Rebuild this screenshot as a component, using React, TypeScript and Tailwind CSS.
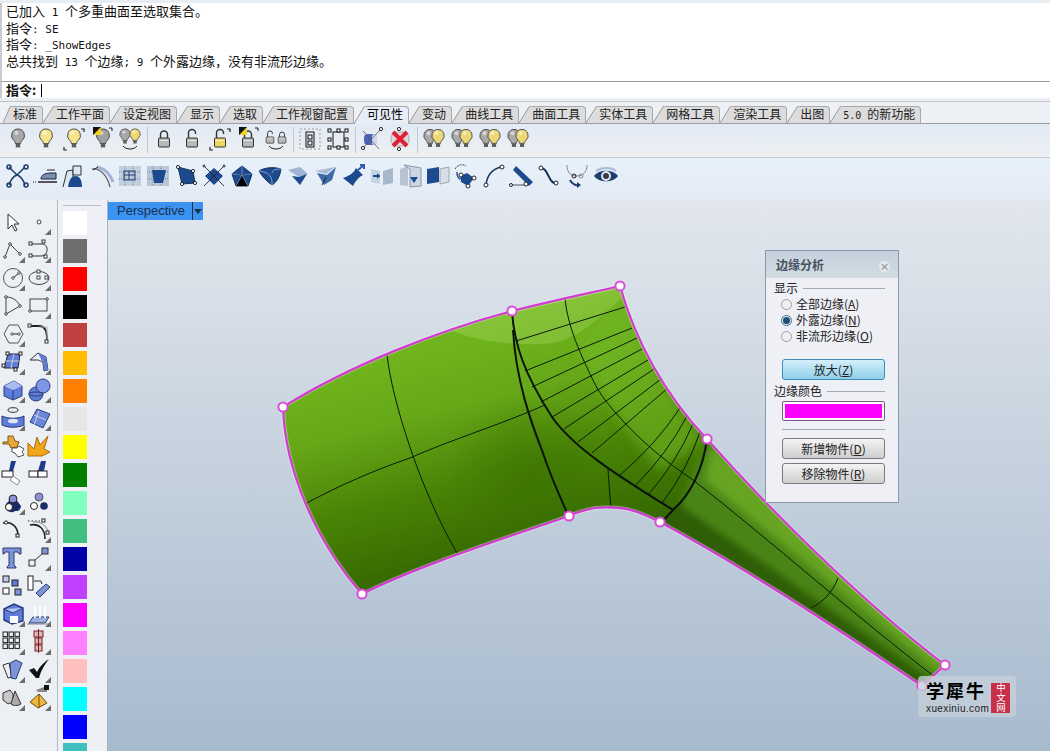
import React from "react";

const CN = '"Noto Sans CJK SC","Liberation Sans",sans-serif';
const LINE = '"Liberation Sans","Noto Sans CJK SC",sans-serif';
const MONO = '"DejaVu Sans Mono","Noto Sans CJK SC",monospace';

const Lat = ({ children, big }: { children: React.ReactNode; big?: boolean }) => (
  <span className={`${big ? "text-[11px]" : "text-[10px]"} leading-none`} style={{ fontFamily: MONO }}>{children}</span>
);

const S = ({ children, size = 26, box = 26 }: { children: React.ReactNode; size?: number; box?: number }) => (
  <svg width={size} height={size} viewBox={`0 0 ${box} ${box}`} className="block">{children}</svg>
);

const bulbPath = "M0-9a6.5 6.5 0 0 0-4 11.6c1 1 1.3 2 1.3 3h5.4c0-1 .3-2 1.3-3A6.5 6.5 0 0 0 0-9z";
const Bulb = ({ x = 13, y = 12, c = "#a8a8a8", s = 1 }: { x?: number; y?: number; c?: string; s?: number }) => (
  <g transform={`translate(${x} ${y}) scale(${s})`}>
    <path d={bulbPath} fill={c} stroke="#4c4c4c" strokeWidth="1" />
    <path d="M-2.2 6h4.4v3.4h-4.4z" fill="#5c5c5c" />
    <ellipse cx="-1.5" cy="-5" rx="2" ry="2" fill="#fff" opacity=".55" />
  </g>
);
const Lock = ({ x = 13, y = 15, c = "#b8b8b8", open = false, s = 1 }: { x?: number; y?: number; c?: string; open?: boolean; s?: number }) => (
  <g transform={`translate(${x} ${y}) scale(${s})`}>
    <path d={open ? "M-3.5-3v-5a3.5 3.5 0 0 1 7 0v1" : "M-3.5-3v-3.5a3.5 3.5 0 0 1 7 0V-3"} fill="none" stroke="#333" strokeWidth="1.4" />
    <rect x="-5.5" y="-3" width="11" height="9" rx="1" fill={c} stroke="#333" />
    <path d="M-4-.5h8" stroke="#fff" opacity=".7" />
  </g>
);
const Corners = () => (
  <path d="M3 21v3h3M20 3h3v3M3 3" fill="none" stroke="#222" strokeWidth="1.2" />
);
const Flag = () => (
  <g>
    <rect x="4" y="1" width="8" height="8" fill="#111" />
    <path d="M12 1v8H4z" fill="#f0d020" />
    <path d="M20 2h3v3" fill="none" stroke="#222" />
  </g>
);
const Dual = () => (
  <g>
    <Bulb x={9} y={12} c="#a9a9a9" s={0.95} />
    <Bulb x={17} y={12} c="#ecd874" s={0.95} />
  </g>
);
const B = "#1d4a8c", D = "#12305e", L = "#7fa3d6";
const H = ({ x, y, r = 1.6 }: { x: number; y: number; r?: number }) => <circle cx={x} cy={y} r={r} fill="#fff" stroke="#111" strokeWidth=".9" />;

const row1: (React.ReactNode | null)[] = [
  <Bulb />,
  <Bulb c="#f6e48c" />,
  <><Bulb c="#f6e48c" /><Corners /></>,
  <><Bulb c="#a0a0a0" x={14} /><Flag /></>,
  <><Bulb x={8} y={10} s={0.8} /><Bulb x={18} y={10} c="#ecd874" s={0.8} /><path d="M6 20c3 4 11 4 14 0" fill="none" stroke="#222" /></>,
  null,
  <Lock />,
  <Lock open />,
  <><Lock c="#eed75e" open /><Corners /></>,
  <><Lock /><Flag /></>,
  <><Lock x={7} y={13} s={0.7} open /><Lock x={19} y={13} s={0.7} /><path d="M6 20c3 4 11 4 14 0" fill="none" stroke="#222" /></>,
  null,
  <g fill="none" stroke="#999"><rect x="3" y="3" width="20" height="20" strokeDasharray="2 2" /><rect x="9" y="6" width="8" height="15" stroke="#111" /><rect x="11" y="9" width="4" height="4" stroke="#111" /><rect x="11" y="15" width="4" height="4" stroke="#111" /></g>,
  <g fill="#fff" stroke="#111"><rect x="8" y="6" width="11" height="15" fill="none" /><rect x="3" y="3" width="3" height="3" /><rect x="12" y="3" width="3" height="3" /><rect x="20" y="3" width="3" height="3" /><rect x="3" y="12" width="3" height="3" /><rect x="20" y="12" width="3" height="3" /><rect x="3" y="20" width="3" height="3" /><rect x="12" y="20" width="3" height="3" /><rect x="20" y="20" width="3" height="3" /></g>,
  null,
  <g><rect x="5" y="8" width="13" height="11" rx="4" fill="#4a64b8" /><rect x="13" y="8" width="5" height="11" rx="2.5" fill="#d0d8f0" /><path d="M4 22L22 3M4 5l16 18" stroke="#555" strokeWidth=".8" /><H x={22} y={3} /><H x={4} y={22} /></g>,
  <g><rect x="4" y="6" width="18" height="14" rx="6" fill="#d8d8e2" stroke="#aaa" /><path d="M6 6l14 14M20 6L6 20" stroke="#e02030" strokeWidth="4" /><H x={12} y={3} /><H x={12} y={23} /></g>,
  null,
  <Dual />, <Dual />, <Dual />, <Dual />,
];

const row2: React.ReactNode[] = [
  <g fill="none" stroke="#1c3a68" strokeWidth="1.5"><path d="M4 4l8 8 8-8M4 22c2-6 5-9 8-10 3 1 6 4 8 10" /><circle cx="4" cy="4" r="2" /><circle cx="21" cy="4" r="2" /><circle cx="4" cy="22" r="2" /><circle cx="21" cy="22" r="2" /></g>,
  <g><path d="M8 16c0-4 4-6 10-6h5v6z" fill="#7b8fb4" stroke="#223" /><path d="M5 19h19" stroke="#223" strokeWidth="1.5" /><path d="M0 19h4" stroke="#223" strokeDasharray="1 1" /><path d="M14 7h8" stroke="#223" /></g>,
  <g><path d="M2 24L6 8l6-1v7" fill="#dfe5ee" stroke="#234" /><path d="M12 3h8v9h-8z" fill="#dfe5ee" stroke="#234" /><path d="M7 24c1-8 4-11 8-11 4 0 6 5 6 11z" fill={B} /></g>,
  <g fill="none"><path d="M3 6c8-1 15 6 18 18" stroke="#666" strokeWidth="1.4" /><path d="M8 4c7 1 13 7 16 15" stroke="#9fb3d4" strokeWidth="3" /><path d="M4 7l5-3" stroke="#222" /></g>,
  <g><rect x="2" y="3" width="22" height="20" fill="#c3cfdf" /><path d="M2 9h22M2 16h22M8 3v20M16 3v20" stroke="#7b8aa0" strokeDasharray="1 1" /><rect x="7" y="8" width="11" height="9" fill="none" stroke="#1d3a70" /><path d="M12 8v9M7 12h11" stroke="#1d3a70" /></g>,
  <g><rect x="2" y="3" width="22" height="20" fill="#b9c6d8" /><path d="M2 9h22M2 16h22M8 3v20M16 3v20" stroke="#7b8aa0" strokeDasharray="1 1" /><path d="M7 7h14l-3 13H9z" fill={B} /></g>,
  <g><path d="M5 4l15 4 2 12-13 1z" fill={B} stroke={D} /><H x={5} y={4} /><H x={20} y={8} /><H x={22} y={20} /><H x={9} y={21} /></g>,
  <g><path d="M13 5l9 8-9 9-9-9z" fill={B} /><path d="M3 3l20 20M23 3L3 23" stroke="#223" strokeWidth=".9" /><H x={3} y={3} r={1} /><H x={23} y={3} r={1} /></g>,
  <g><path d="M13 3l10 8-4 12H7L3 11z" fill={B} stroke={D} /><path d="M13 3v9M3 11l10 1 10-1M7 23l6-11 6 11" stroke={L} strokeWidth=".7" /></g>,
  <g><path d="M2 8c6-4 16-4 22-2-1 7-4 13-9 16C9 18 5 13 2 8z" fill={B} stroke={D} /><path d="M2 8c7 1 14 3 13 14M24 6c-5 0-9 1-9 4" stroke={L} fill="none" /></g>,
  <g><path d="M3 7l12-3 8 7-9 3z" fill="#9fb4d4" /><path d="M7 13l7 1 8-3-7 11z" fill={B} /></g>,
  <g><path d="M2 8l20-4-9 7z" fill="#a8bcd8" /><path d="M4 10l10 2 9-8-4 13-8 5z" fill="#3f6aa8" /><path d="M9 22l4-8" stroke="#223" /></g>,
  <g><path d="M2 15C8 13 13 10 15 5l7 7c-4 2-8 6-10 11z" fill={B} /><path d="M17 7l6-5M19 2h4v4" stroke="#2a5aa8" strokeWidth="2" fill="none" /></g>,
  <g><path d="M2 6l9 2v13l-9-2z" fill="#c6d2e2" /><path d="M14 8l10-3v15l-10 2z" fill="#a8b8cc" /><path d="M4 13h7" stroke={B} strokeWidth="2" /><path d="M8 10l3 3-3 3z" fill={B} /></g>,
  <g><path d="M3 6l8-3v20l-8-1z" fill="#b8c4d4" /><path d="M7 2l17 3v18L13 24V6z" fill="#cdd6e2" stroke="#8896aa" /><path d="M13 14h8l-4 6z" fill={B} /></g>,
  <g><path d="M2 6l12-2v15L2 21z" fill={B} /><path d="M15 6l9-2v15l-9 2z" fill="#d6dde8" stroke="#9aa" /></g>,
  <g><path d="M7 13l7-3 7 5-6 8-7-4z" fill={B} /><H x={8} y={12} r={2} /><H x={21} y={15} r={2} /><H x={15} y={23} r={2} /><path d="M2 6c3-5 8-5 11-3" stroke="#444" strokeDasharray="2 1" fill="none" /><path d="M4 9c0 3 1 6 3 7" stroke={B} fill="none" strokeWidth="1.4" /></g>,
  <g fill="none"><path d="M5 22C6 12 12 6 20 4" stroke="#1c3a68" strokeWidth="1.6" /><circle cx="5" cy="22" r="2" fill="#fff" stroke="#222" /><circle cx="21" cy="4" r="2" fill="#fff" stroke="#222" /></g>,
  <g><path d="M7 3l17 16-4 4L4 7z" fill={B} /><path d="M2 22h14" stroke="#556" /><circle cx="2" cy="22" r="1.5" fill="#fff" stroke="#223" /><circle cx="17" cy="21" r="2" fill="#fff" stroke="#223" /></g>,
  <g fill="none"><path d="M3 6c4-2 6 2 8 6s4 9 9 8" stroke="#12305e" strokeWidth="2" /><circle cx="4" cy="5" r="2" fill="#fff" stroke="#223" /><circle cx="19" cy="20" r="2" fill="#fff" stroke="#223" /></g>,
  <g fill="none"><path d="M2 2c0 8 4 11 10 11s10-4 10-11" stroke="#888" /><circle cx="9" cy="13" r="2" stroke="#223" /><circle cx="16" cy="13" r="2" stroke="#889" /><path d="M5 17c2 4 6 6 9 5" stroke="#1d3a70" strokeWidth="2" /><path d="M12 19l4 3-4 3z" fill="#1d3a70" /></g>,
  <g><path d="M1 13c5-7 19-7 24 0-5 7-19 7-24 0z" fill="#1c3f70" /><path d="M3 8c6-4 15-4 20 0" stroke="#a8bcd4" strokeWidth="2" fill="none" /><circle cx="13" cy="13" r="5" fill="#e4e8ec" /><circle cx="13" cy="13" r="3" fill="#3a3a44" /></g>,
];

const BO = "#5f7cd8";
type Cell = { n: React.ReactNode; t?: boolean };
const left: Cell[] = [
  { n: <path d="M7 5v15l4-4 3 6 2-1-3-6h5z" fill="#fff" stroke="#333" /> },
  { n: <circle cx="12" cy="13" r="2" fill="#fff" stroke="#444" />, t: true },
  { n: <g fill="none" stroke="#444"><path d="M4 20L9 7l10 10" /><circle cx="4" cy="20" r="1.3" fill="#fff" /><circle cx="9" cy="7" r="1.3" fill="#fff" /><circle cx="19" cy="17" r="1.3" fill="#fff" /></g>, t: true },
  { n: <g fill="none" stroke="#333"><path d="M3 7h12c7 0 7 12-1 12H4" /><rect x="2" y="5" width="3" height="3" fill="#fff" /><rect x="15" y="3" width="3" height="3" fill="#fff" /><rect x="2" y="17" width="3" height="3" fill="#fff" /><rect x="17" y="18" width="3" height="3" fill="#fff" /></g>, t: true },
  { n: <g fill="none" stroke="#555"><circle cx="12" cy="13" r="9.5" /><path d="M12 13l6-5" stroke="#222" /><circle cx="12" cy="13" r="1.3" fill="#fff" /><circle cx="18" cy="8" r="1.3" fill="#fff" /></g>, t: true },
  { n: <g fill="none" stroke="#444"><ellipse cx="12" cy="13" rx="10" ry="6.5" /><rect x="10" y="5" width="3" height="3" fill="#fff" /><rect x="10" y="11" width="3" height="3" fill="#fff" /><rect x="18" y="11" width="3" height="3" fill="#fff" /></g>, t: true },
  { n: <g fill="none" stroke="#444"><path d="M5 4c7 0 12 4 14 9L5 21z" /><circle cx="5" cy="4" r="1.3" fill="#fff" /><circle cx="19" cy="13" r="1.3" fill="#fff" /><circle cx="5" cy="21" r="1.3" fill="#fff" /></g> },
  { n: <g fill="none" stroke="#444"><rect x="3" y="6" width="17" height="12" /><circle cx="3" cy="18" r="1.3" fill="#fff" /><circle cx="20" cy="6" r="1.3" fill="#fff" /></g>, t: true },
  { n: <g fill="none" stroke="#555"><path d="M3 13l5-9h9l5 9-5 9H8z" /><path d="M11 13h7" stroke="#222" /><circle cx="11" cy="13" r="1.2" fill="#fff" /><circle cx="18" cy="13" r="1.2" fill="#fff" /></g>, t: true },
  { n: <g fill="none"><path d="M3 5h9c7 0 8 7 8 15" stroke="#222" strokeWidth="1.8" /><path d="M12 6h8v14" stroke="#aaa" /><rect x="1" y="3" width="3" height="3" fill="#fff" stroke="#333" /><rect x="18" y="19" width="3" height="3" fill="#fff" stroke="#333" /></g> },
  { n: <g><path d="M7 5h12l-2 14H3z" fill={BO} stroke="#223" /><path d="M13 5l-3 14M5 12h13" stroke="#ccd" /><rect x="5" y="3" width="3" height="3" fill="#fff" stroke="#222" /><rect x="18" y="3" width="3" height="3" fill="#fff" stroke="#222" /><rect x="1" y="15" width="3" height="3" fill="#fff" stroke="#222" /><rect x="13" y="19" width="3" height="3" fill="#fff" stroke="#222" /></g>, t: true },
  { n: <g><path d="M3 11l8-7 8 4 2 13-4 1-1-8c-2-3-6-3-6-3z" fill="#e8ecf4" stroke="#333" /><path d="M11 4l8 4 2 13-4 1-1-8z" fill={BO} /></g>, t: true },
  { n: <g><path d="M3 9l10-5 8 5v10l-9 4-9-4z" fill={BO} stroke="#2a3f80" /><path d="M3 9l9 4 9-4-8-5z" fill="#a8bcf0" /><path d="M12 13v10" stroke="#2a3f80" /></g>, t: true },
  { n: <g><circle cx="9" cy="17" r="7" fill={BO} stroke="#2a3f80" /><circle cx="16" cy="9" r="7" fill="#7d96e6" stroke="#2a3f80" /><ellipse cx="9" cy="17" rx="7" ry="2" fill="none" stroke="#2a3f80" /></g>, t: true },
  { n: <g><ellipse cx="12" cy="5" rx="5" ry="2.3" fill="none" stroke="#333" /><path d="M1 11c6 3 16 3 22 0v9c-6 3-16 3-22 0z" fill={BO} stroke="#23397c" /><ellipse cx="12" cy="16" rx="5" ry="2.3" fill="#dfe6f6" /></g>, t: true },
  { n: <g><path d="M3 17L10 4l13 5-7 14z" fill="#6c86d8" stroke="#2a3f80" /><path d="M7 10l12 5M12 6l-5 14" stroke="#d0d8ee" /></g>, t: true },
  { n: <g><path d="M2 9h5V3h5l2 5 4 1-2 5-6 1-2-4-6 0z" fill="#eba836" stroke="#7a5a10" /><path d="M11 15h5l2-2 5 3-2 3 2 3-6 2-3-4-3-1z" fill="#fff" stroke="#555" /></g> },
  { n: <path d="M1 23V10l6 6 3-12 3 8 8-9-4 13 6 3-8 4z" fill="#f0a818" stroke="#a86c10" /> },
  { n: <g><path d="M10 0h5l-3 10h-4z" fill="#1d3a8c" /><rect x="1" y="10" width="11" height="6" fill="#fff" stroke="#222" /><path d="M12 15l7 5-3 4-7-5z" fill="#fff" stroke="#888" /></g> },
  { n: <g><path d="M14 0h5l-2 10h-6z" fill="#1d3a8c" /><rect x="2" y="10" width="9" height="6" fill="#fff" stroke="#222" /><rect x="11" y="10" width="9" height="6" fill="#fff" stroke="#222" /></g> },
  { n: <g><path d="M7 13a6 6 0 0 1 10 0l3 4a5 5 0 0 1-6 5 6 6 0 0 1-9-2 5 5 0 0 1 2-7z" fill="#1a2c66" /><circle cx="12" cy="10" r="4" fill="#8f8fd8" stroke="#222" /><circle cx="8" cy="18" r="3.5" fill="#fff" stroke="#222" /></g>, t: true },
  { n: <g><circle cx="12" cy="8" r="4" fill="#8f8fd8" stroke="#555" /><circle cx="7" cy="17" r="3.5" fill="#fff" stroke="#222" /><circle cx="17" cy="17" r="3.8" fill="#1a2c66" /></g> },
  { n: <g fill="none"><path d="M2 6c9-2 15 4 15 13" stroke="#222" strokeWidth="1.5" /><circle cx="5" cy="5.5" r="1.6" fill="#fff" stroke="#222" /><rect x="15" y="17" width="3" height="3" fill="#fff" stroke="#222" /></g> },
  { n: <g fill="none"><path d="M1 4h16" stroke="#333" strokeDasharray="1.5 2" /><path d="M3 8c9-2 15 4 15 14" stroke="#222" strokeWidth="1.6" /><path d="M6 5c8-1 14 4 15 10" stroke="#889" /><rect x="15" y="2" width="3" height="3" fill="#fff" stroke="#222" /><rect x="19" y="14" width="3" height="3" fill="#fff" stroke="#222" /></g>, t: true },
  { n: <g><path d="M2 3h18v6h-2l-1-2h-4v13l2 2v1H6v-1l2-2V7H4L3 9H2z" fill="#7d93d8" stroke="#2a3a70" /></g> },
  { n: <g><rect x="2" y="15" width="6" height="6" fill="#eee" stroke="#333" /><rect x="15" y="3" width="6" height="6" fill="#7d93d8" stroke="#333" /><path d="M8 15l7-6" stroke="#333" /></g>, t: true },
  { n: <g fill="#c0cbe8" stroke="#222"><rect x="2" y="3" width="6" height="6" /><rect x="11" y="7" width="6" height="6" fill="#5f7cd8" /><rect x="2" y="15" width="6" height="6" fill="#fff" /><rect x="14" y="16" width="6" height="6" fill="#7d93d8" /></g> },
  { n: <g><rect x="1" y="3" width="5" height="14" fill="#fff" stroke="#222" /><path d="M9 20l10-9 4 3-10 10z" fill="#7d93d8" stroke="#2a3a70" /><path d="M7 8h7l1 3" fill="none" stroke="#333" /></g> },
  { n: <g><path d="M3 8l10-5 9 4v13l-11 3-8-4z" fill={BO} stroke="#23397c" strokeWidth="1.4" /><path d="M3 8l9 4 10-5" fill="#b4c6f0" stroke="#23397c" /><rect x="9" y="15" width="8" height="7" fill="#fff" /></g>, t: true },
  { n: <g><path d="M2 22l4-6h16l-4 6z" fill="#9db1e0" stroke="#2a3a70" /><path d="M8 5v12M13 5v12M18 5v12" stroke="#fff" strokeWidth="1.6" /><path d="M0 23h22" stroke="#889" /></g>, t: true },
  { n: <g fill="none" stroke="#333" strokeWidth="1.1">{[3, 9, 15].flatMap((y) => [2, 8, 14].map((x) => <rect key={`${x}-${y}`} x={x} y={y} width="4.5" height="4.5" />))}</g>, t: true },
  { n: <g fill="#d8b8b8" stroke="#7a2020"><rect x="7" y="2" width="9" height="6" /><rect x="8" y="9" width="7" height="6" /><rect x="8" y="16" width="7" height="6" /><path d="M11.5 0v24" /></g>, t: true },
  { n: <g><path d="M2 8l6-2 3 14-4 1z" fill="#eee" stroke="#333" /><path d="M9 6l6-3 6 3-6 16-5-1z" fill="#7d93d8" stroke="#2a3a70" /></g>, t: true },
  { n: <path d="M2 13l5-2 3 4c3-6 7-10 12-13-4 5-8 11-10 19h-3z" fill="#111" />, t: true },
  { n: <g><path d="M2 8l7-3 3 4v8l-5 2-5-4z" fill="#c8c8c8" stroke="#333" /><path d="M14 6l6 13c-3 2-8 2-10 0z" fill="#aaa" stroke="#333" /></g>, t: true },
  { n: <g><path d="M3 17l9-8 8 9-9 5z" fill="#eeb73c" stroke="#6a5010" /><path d="M12 9v14" stroke="#6a5010" /><path d="M9 5l8-3 3 2v3h-9z" fill="#888" /><rect x="17" y="0" width="5" height="5" fill="#111" /></g>, t: true },
];

const swatches = ["#ffffff", "#6e6e6e", "#ff0000", "#000000", "#bf4040", "#ffbf00", "#ff8000", "#e6e6e6", "#ffff00", "#008000", "#80ffbf", "#40bf80", "#0000a6", "#bf40ff", "#ff00ff", "#ff80ff", "#ffbfbf", "#00ffff", "#0000ff", "#40bfbf"];

const tabs: { t: React.ReactNode; a?: boolean }[] = [
  { t: "标准" }, { t: "工作平面" }, { t: "设定视图" }, { t: "显示" }, { t: "选取" }, { t: "工作视窗配置" }, { t: "可见性", a: true }, { t: "变动" }, { t: "曲线工具" }, { t: "曲面工具" }, { t: "实体工具" }, { t: "网格工具" }, { t: "渲染工具" }, { t: "出图" }, { t: <><Lat>5.0&nbsp;</Lat>的新功能</> },
];

const Tab = ({ t, a, first }: { t: React.ReactNode; a?: boolean; first?: boolean }) => {
  const fill = a ? "#e8eef8" : "#dcdcdc";
  const w = first ? 10 : 13;
  return (
    <div className={`flex ${a ? "h-[18px] -mb-px relative" : "h-[17px]"}`}>
      <svg width={w} height={a ? 18 : 17} className="block shrink-0">
        <path d={`M0 ${a ? 18 : 17}L${w - 3} 1Q${w - 2} 0 ${w} 0V18H0z`} fill={fill} />
        <path d={`M0 ${a ? 18 : 17}L${w - 3} 1Q${w - 2} 0 ${w} 0`} fill="none" stroke="#9a9a9a" />
      </svg>
      <div className={`pr-[5px] border-t border-r rounded-tr-[4px] border-[#a8a8a8] leading-[14px] whitespace-nowrap ${a ? "h-[18px] bg-[#e8eef8] text-black" : "h-[17px] bg-[#dcdcdc] text-[#222]"}`}>{t}</div>
    </div>
  );
};

const Radio = ({ on, children }: { on?: boolean; children: React.ReactNode }) => (
  <div className="flex items-center h-4 pl-[7px]">
    <span className={`w-[11px] h-[11px] rounded-full border flex items-center justify-center ${on ? "border-[#46708c] bg-[#dcecf4]" : "border-[#9aa0a6] bg-[#f0f0f0]"}`}>
      {on && <span className="w-[7px] h-[7px] rounded-full bg-[#1f4f78]" />}
    </span>
    <span className="ml-[4px] text-[12px] text-[#222]">{children}</span>
  </div>
);

const Section = ({ label }: { label: string }) => (
  <div className="flex items-center h-4 text-[12px] text-[#222]">
    <span>{label}</span>
    <span className="flex-1 h-px bg-[#a4a8b0] ml-[5px]" />
  </div>
);

const Btn = ({ label, k, blue, mt }: { label: string; k: string; blue?: boolean; mt: string }) => (
  <div className={`${mt} ml-[8px] h-[21px] rounded-[3px] border flex items-center justify-center text-[12px] text-[#222] ${blue ? "border-[#3a8fb8] bg-gradient-to-b from-[#d4f0fb] to-[#8fcfe8]" : "border-[#7a7a7a] bg-gradient-to-b from-[#f4f4f4] to-[#cfcfcf]"}`}>
    {label}(<span className="underline">{k}</span>)
  </div>
);

const edge = "M283 407C350 365 440 330 512 311C560 299 590 293 620 286C635 340 665 395 707 439C770 510 860 600 945 665L922 686C840 630 740 565 660 522C640 512 625 505 595 508C585 510 575 513 569 516C500 540 420 565 362 594C315 540 285 470 283 407Z";
const handles: [number, number][] = [[283, 407], [512, 311], [620, 286], [707, 439], [945, 665], [922, 686], [660, 522], [569, 516], [362, 594]];
const thin: [number, number, number, number][] = [
  [625, 307, 516, 341], [632, 328, 525, 371], [637, 338, 532, 387], [642, 349, 541, 402], [648, 360, 552, 417], [654, 369, 564, 429], [661, 379, 578, 442], [668, 388, 592, 453],
];
const thinCurved: [number, number, number, number][] = [
  [680, 408, 620, 475], [687, 416, 635, 486], [693, 424, 648, 495], [700, 432, 662, 503],
];

const Model = () => (
  <svg className="absolute inset-0" width="942" height="551" viewBox="108 200 942 551">
    <defs>
      <linearGradient id="body" gradientUnits="userSpaceOnUse" x1="400" y1="320" x2="470" y2="590">
        <stop offset="0" stopColor="#74ba20" />
        <stop offset=".35" stopColor="#66a818" />
        <stop offset=".62" stopColor="#4a8406" />
        <stop offset="1" stopColor="#2f6000" />
      </linearGradient>
      <radialGradient id="glow" cx=".5" cy=".5" r=".5">
        <stop offset="0" stopColor="#3a7000" stopOpacity=".6" />
        <stop offset="1" stopColor="#3a7000" stopOpacity="0" />
      </radialGradient>
      <filter id="soft" x="-20%" y="-20%" width="140%" height="140%"><feGaussianBlur stdDeviation="6" /></filter>
      <filter id="soft2" x="-20%" y="-20%" width="140%" height="140%"><feGaussianBlur stdDeviation="3.5" /></filter>
      <clipPath id="clip"><path d={edge} /></clipPath>
    </defs>
    <path d={edge} fill="url(#body)" />
    <g clipPath="url(#clip)">
      <path d="M707 439C703 470 690 495 673 510L662 522L922 690L950 665Z" fill="#2f5e06" />
      <path d="M707 439L945 665L932 680L680 505Z" fill="#4a8512" filter="url(#soft2)" />
      <path d="M712 445L948 665L938 672L705 480Z" fill="#66a424" filter="url(#soft2)" />
      <path d="M440 325C470 342 520 347 553 343C575 338 590 327 622 298L620 280L500 295Z" fill="#a8d860" opacity=".38" />
      <ellipse cx="530" cy="475" rx="85" ry="80" fill="url(#glow)" />
      <path d="M622 300C640 350 670 400 705 440L660 470C625 430 590 380 575 340Z" fill="#72b826" opacity=".55" filter="url(#soft)" />
    </g>
    <g fill="none" stroke="#0b1a08" strokeWidth="1">
      <path d="M387 355C392 400 420 490 457 553" />
      <path d="M305 504C340 485 375 470 410 458C450 440 500 425 545 405" />
      <path d="M565 298C567 320 575 345 597 388C610 410 640 440 663 458C675 468 685 474 693 480C770 540 860 620 935 677" />
      <path d="M608 469C609 485 610 497 611 507" />
      {thin.map(([a, b, c, d], i) => (
        <line key={i} x1={a} y1={b} x2={c} y2={d} />
      ))}
      {thinCurved.map(([a, b, c, d], i) => (
        <path key={i} d={`M${a} ${b}Q${(a + c) / 2 + 6} ${(b + d) / 2 + 3} ${c} ${d}`} />
      ))}
      <path d="M811 608C822 603 833 592 838 578" />
    </g>
    <g fill="none" stroke="#081408" strokeWidth="2">
      <path d="M512 311C514 345 525 375 552 417C575 450 625 480 673 510" />
      <path d="M513 330C516 380 530 420 543 453C550 475 560 497 569 517" />
      <path d="M707 439C703 470 690 495 673 510L662 522" />
    </g>
    <path d={edge} fill="none" stroke="#fff" strokeOpacity=".35" strokeWidth="4" />
    <path d={edge} fill="none" stroke="#d23cd2" strokeWidth="2.2" />
    {handles.map(([x, y], i) => (
      <circle key={i} cx={x} cy={y} r="4.6" fill="#fff" stroke="#dc4cdc" strokeWidth="2" />
    ))}
  </svg>
);

const lines: React.ReactNode[] = [
  <>已加入<Lat big>&nbsp;1&nbsp;</Lat>个多重曲面至选取集合。</>,
  <>指令<Lat big>:&nbsp;SE</Lat></>,
  <>指令<Lat big>:&nbsp;_ShowEdges</Lat></>,
  <>总共找到<Lat big>&nbsp;13&nbsp;</Lat>个边缘<Lat big>;&nbsp;9&nbsp;</Lat>个外露边缘，没有非流形边缘。</>,
];

export default function App() {
  return (
    <div className="w-[1050px] h-[751px] overflow-hidden flex flex-col bg-[#e8edf4] text-[12px]" style={{ fontFamily: CN }}>
      <div className="h-[3px] shrink-0 bg-[#e8ecf3]" />
      <div className="h-[78px] shrink-0 bg-white pl-[4px] border-l-2 border-[#c8ccd2] text-[13px] text-[#111]" style={{ fontFamily: LINE }}>
        {lines.map((l, i) => (
          <div key={i} className="h-[16.67px] leading-[17px] whitespace-nowrap">{l}</div>
        ))}
      </div>
      <div className="h-[17px] shrink-0 bg-white border-t border-[#9e9e9e] border-l-2 border-l-[#c8ccd2] pl-[4px] flex items-center text-[13px] font-bold text-[#111]">
        指令:<span className="ml-[5px] w-px h-[13px] bg-black" />
      </div>
      <div className="h-[3px] shrink-0 bg-[#eaeef4]" />
      <div className="h-[22px] shrink-0 border-t border-[#c0c4ca] bg-[#edf0f5] flex items-end pl-[3px]">
        {tabs.map((x, i) => (
          <Tab key={i} t={x.t} a={x.a} first={i === 0} />
        ))}
      </div>
      <div className="h-[35px] shrink-0 border-t border-[#9ca0a6] bg-gradient-to-b from-[#e2eaf6] to-[#eef0f2] border-b border-b-[#c8ccd2] flex items-start pt-[1px] pl-[4px]">
        {row1.map((n, i) =>
          n === null ? (
            <span key={i} className="w-px h-[26px] mx-[2.5px] mt-[2px] bg-[#c4c8d0]" />
          ) : (
            <span key={i} className="w-7 h-7 flex items-center justify-center"><S>{n}</S></span>
          ),
        )}
      </div>
      <div className="h-[42px] shrink-0 bg-gradient-to-b from-[#e8f2fb] to-[#e4eaf5] flex items-start pt-[4px] pl-[4px]">
        {row2.map((n, i) => (
          <span key={i} className="w-7 h-7 flex items-center justify-center"><S>{n}</S></span>
        ))}
      </div>
      <div className="flex-1 flex min-h-0">
        <div className="w-[58px] shrink-0 bg-[#eceff4] border-r border-[#b4bac4] pt-[8px] overflow-hidden">
          <div className="grid grid-cols-[26px_28px] auto-rows-[28px]">
            {left.map((c, i) => (
              <svg key={i} width="26" height="28" viewBox="0 0 26 28" className="block overflow-visible">
                <g transform="translate(1 1)">{c.n}</g>
                {c.t && <path d="M25 27v-6l-6 6z" fill="#6c6c6c" />}
              </svg>
            ))}
          </div>
        </div>
        <div className="w-[50px] shrink-0 bg-[#eef0f5] border-r border-[#a8b4c6] pl-[5px] pt-[11px] overflow-hidden">
          <div className="h-px w-[38px] -mt-[6px] mb-[5px] bg-[#b8bcc4]" />
          <div className="flex flex-col gap-1">
            {swatches.map((c) => (
              <div key={c} className="w-6 h-6 shrink-0" style={{ backgroundColor: c }} />
            ))}
          </div>
        </div>
        <div className="flex-1 relative bg-gradient-to-b from-[#e2e7ed] to-[#a7bace] overflow-hidden">
          <Model />
          <div className="absolute left-0 top-[2px] w-[95px] h-[18px] bg-[#3c92f0] flex items-center text-[#16304e] text-[13px]" style={{ fontFamily: '"Liberation Sans",sans-serif' }}>
            <span className="ml-[9px] flex-1">Perspective</span>
            <span className="w-[11px] h-[18px] border-l border-[#16304e] flex items-center justify-center">
              <span className="w-0 h-0 border-x-[4px] border-x-transparent border-t-[5px] border-t-[#16304e]" />
            </span>
          </div>
          <div className="absolute left-[657px] top-[50px] w-[134px] h-[253px] bg-[#eef0f6] border border-[#8b9aa8]">
            <div className="h-[27px] bg-gradient-to-b from-[#c4d0dc] to-[#d3dce4] flex items-center pl-[10px] pr-[8px] font-bold text-[#46525e]">
              <span className="flex-1">边缘分析</span>
              <span className="w-[11px] h-[11px] mt-[4px] rounded-full bg-[#e4e8ec] text-[#8a949e] text-[10px] leading-[11px] text-center">×</span>
            </div>
            <div className="pl-[8px] pr-[13px] pt-[2px]">
              <Section label="显示" />
              <Radio>全部边缘(<span className="underline">A</span>)</Radio>
              <Radio on>外露边缘(<span className="underline">N</span>)</Radio>
              <Radio>非流形边缘(<span className="underline">O</span>)</Radio>
              <Btn label="放大" k="Z" blue mt="mt-[15px]" />
              <div className="mt-[3px]"><Section label="边缘颜色" /></div>
              <div className="mt-[2px] ml-[8px] h-[20px] border border-[#7a5a80] rounded-[2px] p-[2px] bg-white">
                <div className="h-full bg-[#ff00ff]" />
              </div>
              <div className="mt-[8px] ml-[8px] h-px bg-[#a4a8b0]" />
              <Btn label="新增物件" k="D" mt="mt-[8px]" />
              <Btn label="移除物件" k="R" mt="mt-[4px]" />
            </div>
          </div>
          <div className="absolute left-[810px] top-[476px] w-[98px] h-[41px] rounded-[4px] bg-[#c4cfda]/80 pl-[8px] flex">
            <div className="w-[64px]">
              <div className="h-[27px] pt-[2px] text-[18px] leading-[25px] font-bold text-black tracking-[2px] whitespace-nowrap">学犀牛</div>
              <div className="mt-[1px] text-[10px] leading-[10px] text-[#222] tracking-[.4px] whitespace-nowrap" style={{ fontFamily: '"Liberation Sans",sans-serif' }}>xuexiniu.com</div>
            </div>
            <div className="ml-[1px] mt-[7px] w-[19px] h-[30px] bg-[#c8304a] text-white text-[9.5px] leading-[19px] tracking-[0.5px] text-center [writing-mode:vertical-rl]">中文网</div>
          </div>
        </div>
      </div>
    </div>
  );
}
